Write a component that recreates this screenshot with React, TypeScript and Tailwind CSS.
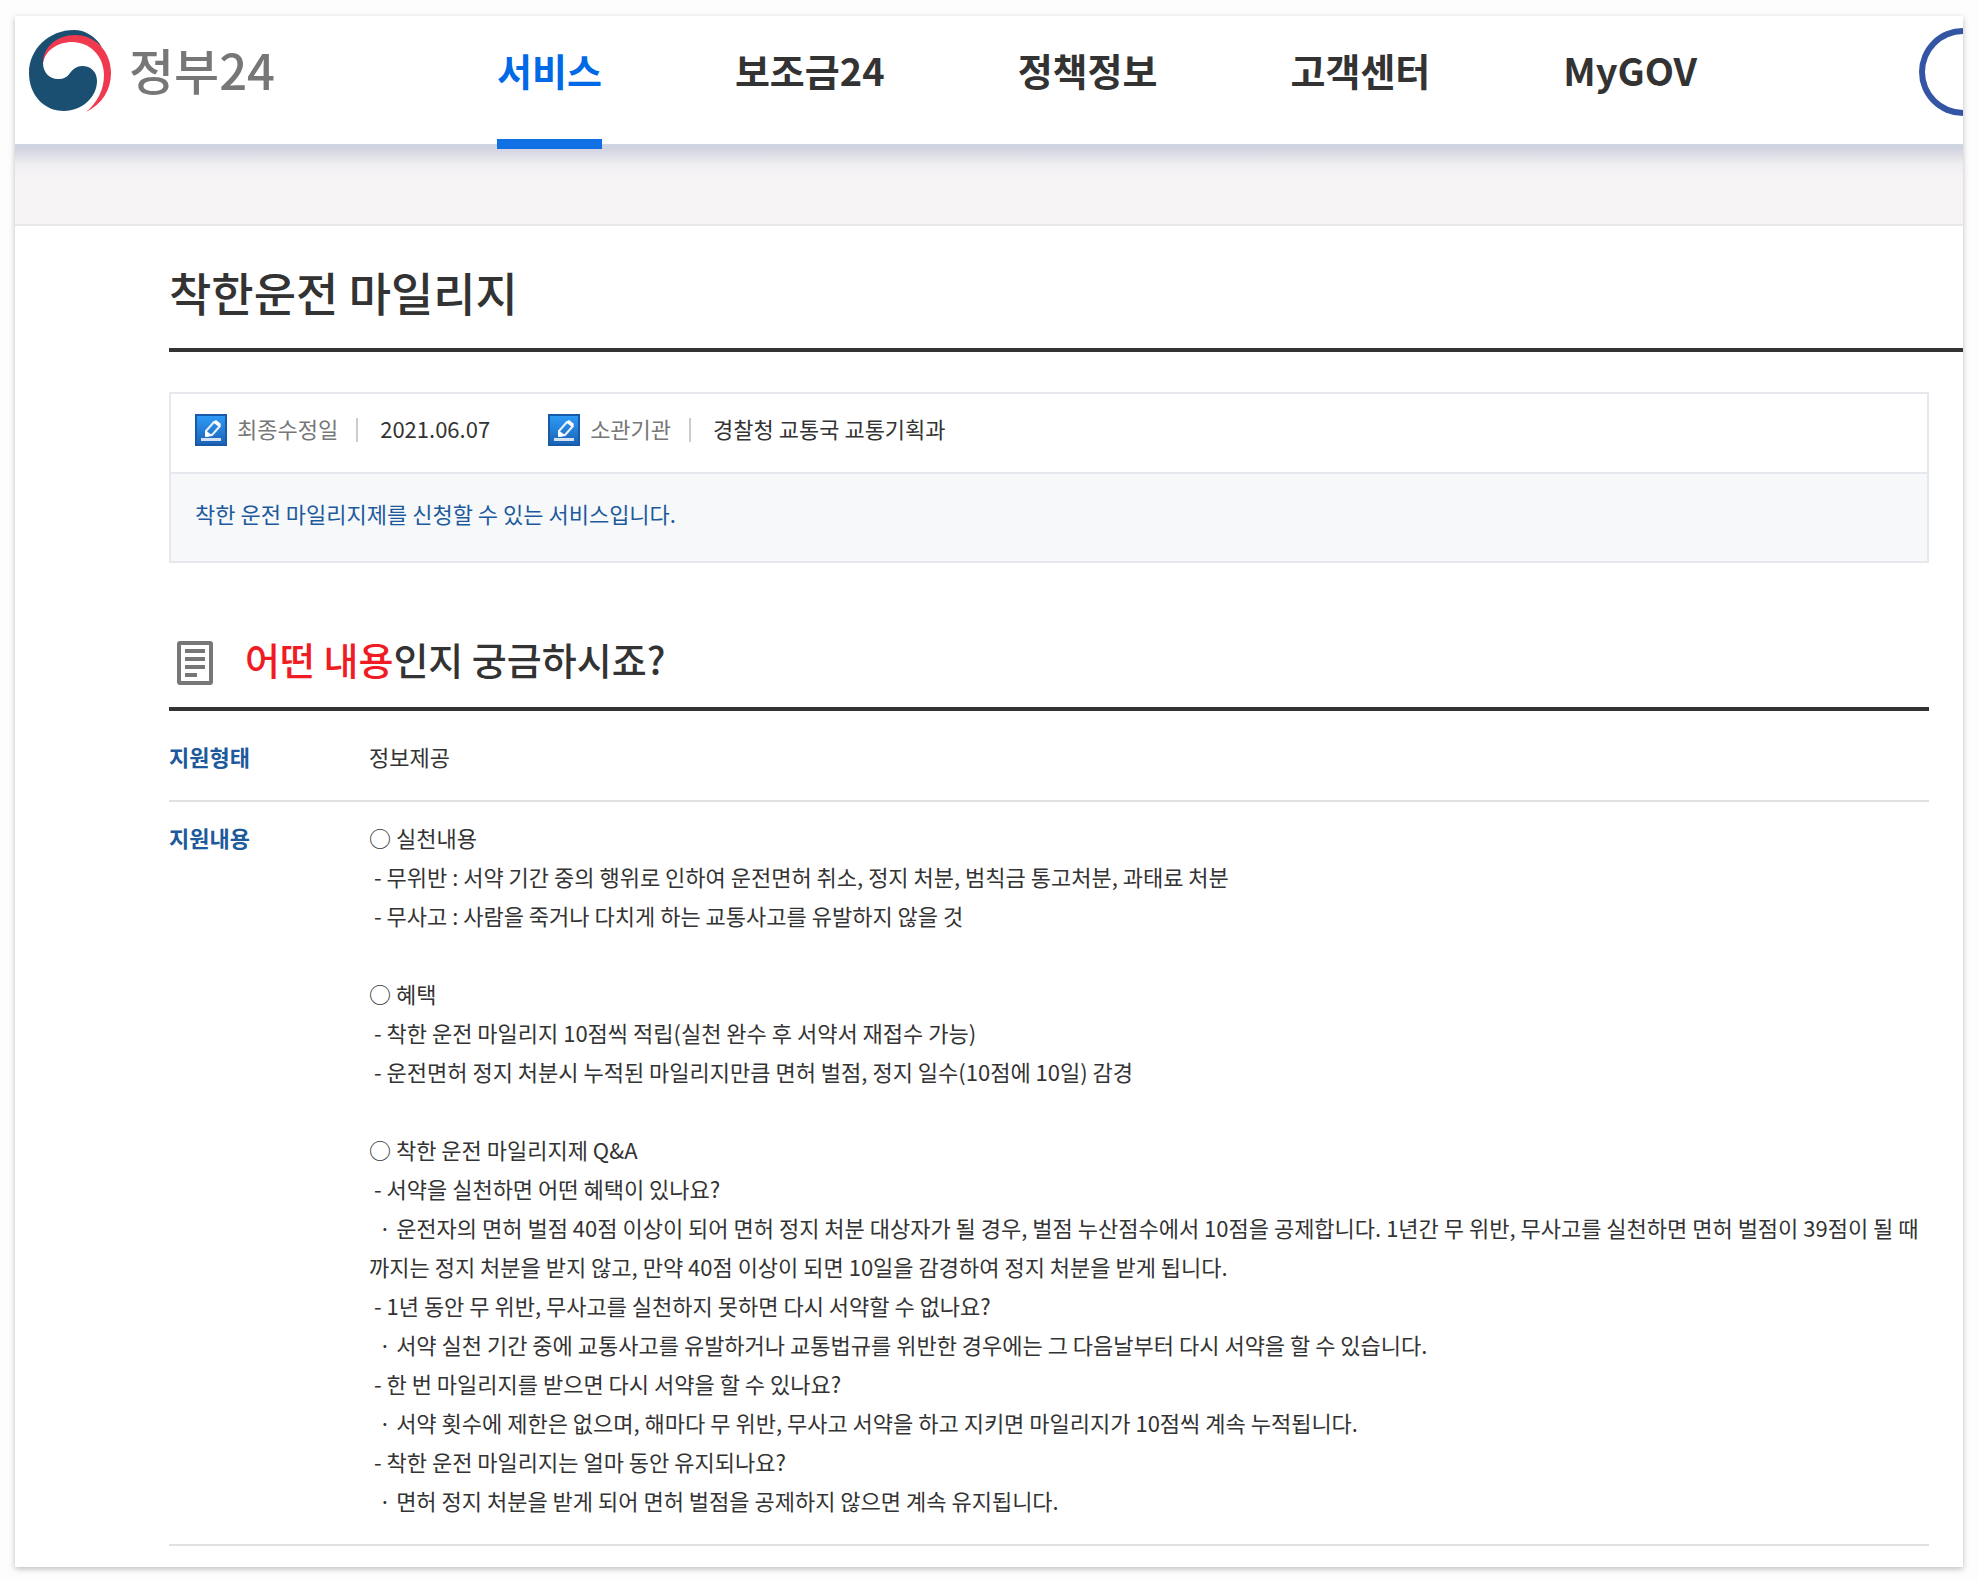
import { ReactNode } from "react";

const NAV_ITEMS = [
  { label: "서비스", active: true },
  { label: "보조금24" },
  { label: "정책정보" },
  { label: "고객센터" },
  { label: "MyGOV" },
];

const DETAILS = `○ 실천내용
 - 무위반 : 서약 기간 중의 행위로 인하여 운전면허 취소, 정지 처분, 범칙금 통고처분, 과태료 처분
 - 무사고 : 사람을 죽거나 다치게 하는 교통사고를 유발하지 않을 것

○ 혜택
 - 착한 운전 마일리지 10점씩 적립(실천 완수 후 서약서 재접수 가능)
 - 운전면허 정지 처분시 누적된 마일리지만큼 면허 벌점, 정지 일수(10점에 10일) 감경

○ 착한 운전 마일리지제 Q&A
 - 서약을 실천하면 어떤 혜택이 있나요?
  · 운전자의 면허 벌점 40점 이상이 되어 면허 정지 처분 대상자가 될 경우, 벌점 누산점수에서 10점을 공제합니다. 1년간 무 위반, 무사고를 실천하면 면허 벌점이 39점이 될 때까지는 정지 처분을 받지 않고, 만약 40점 이상이 되면 10일을 감경하여 정지 처분을 받게 됩니다.
 - 1년 동안 무 위반, 무사고를 실천하지 못하면 다시 서약할 수 없나요?
  · 서약 실천 기간 중에 교통사고를 유발하거나 교통법규를 위반한 경우에는 그 다음날부터 다시 서약을 할 수 있습니다.
 - 한 번 마일리지를 받으면 다시 서약을 할 수 있나요?
  · 서약 횟수에 제한은 없으며, 해마다 무 위반, 무사고 서약을 하고 지키면 마일리지가 10점씩 계속 누적됩니다.
 - 착한 운전 마일리지는 얼마 동안 유지되나요?
  · 면허 정지 처분을 받게 되어 면허 벌점을 공제하지 않으면 계속 유지됩니다.`;

function TaegukLogo() {
  return (
    <svg viewBox="0 0 82 82" className="size-[82px]" aria-hidden="true">
      <path
        fill="#1b4f72"
        d="M73 17C66 6 56 0 45 0 20 0 0 19 0 43c0 22 15 38 35 38 18 0 33-14 33-30 0-9-6-15-15-15-5 0-9 3-12 7-3 4-6 6-12 6-9 0-15-7-15-16C16 19 29 8 45 6c11 0 20 4 28 11z"
      />
      <path
        fill="#f0384f"
        d="M14 33C14 17 28 5 46 5c20 0 36 16 36 38 0 17-9 31-25 39 11-9 18-22 18-37 0-19-14-33-32-33-15 0-27 9-29 21z"
      />
    </svg>
  );
}

function EditIcon() {
  return (
    <svg viewBox="0 0 32 32" className="size-8" aria-hidden="true">
      <defs>
        <linearGradient id="edit-bg" x1="0" y1="0" x2="0" y2="1">
          <stop offset="0" stopColor="#2d9cf8" />
          <stop offset="1" stopColor="#1c62b5" />
        </linearGradient>
      </defs>
      <rect x="1" y="1" width="30" height="30" fill="url(#edit-bg)" stroke="#175ba8" strokeWidth="2" />
      <path d="M11 17l8-9 6 4-8 9-5 1z" fill="none" stroke="#e8f1fb" strokeWidth="2" strokeLinejoin="round" />
      <path d="M10 16l7 5-7 2z M18 8l3-2 5 4-2 3z" fill="#fff" />
      <path d="M6 25.5h20" stroke="#d3e1f3" strokeWidth="3" />
    </svg>
  );
}

function DocumentIcon() {
  return (
    <svg viewBox="0 0 36 44" className="h-11 w-9" fill="none" stroke="#777" aria-hidden="true">
      <rect x="2" y="2" width="32" height="40" rx="1" strokeWidth="4" />
      <path d="M8 10h20M8 18h20M8 26h20M8 34h12" strokeWidth="4" />
    </svg>
  );
}

function InfoItem({ label, children }: { label: string; children: ReactNode }) {
  return (
    <div className="flex items-start leading-7">
      <EditIcon />
      <dt className="ml-2.5 text-[#777]">{label}</dt>
      <dd className="ml-[18px] flex gap-[22px] before:mt-1 before:h-6 before:w-0.5 before:bg-[#ccc]">{children}</dd>
    </div>
  );
}

export default function App() {
  return (
    <div className="bg-[#fdfdfd] px-[15px] pt-4 pb-[15px] font-['Noto_Sans_CJK_KR',sans-serif] text-[22px] text-[#333]">
      <div className="overflow-hidden bg-white pb-[21px] shadow-[0_2px_6px_rgba(0,0,0,0.25)]">
        <header className="relative z-10 flex h-[130px] items-start justify-between border-b-2 border-[#ced6e4] bg-white">
          <div className="flex">
            <a href="#" className="mt-3.5 ml-3.5 flex h-[82px] w-[468px] items-start gap-[18px]">
              <TaegukLogo />
              <span className="text-[49px] leading-[78px] font-medium text-[#777]">정부24</span>
            </a>
            <nav className="flex gap-[133px] text-[38px] leading-[108px] font-bold">
              {NAV_ITEMS.map((item) => (
                <a
                  key={item.label}
                  href="#"
                  className={
                    item.active
                      ? "relative text-[#0069e6] after:absolute after:top-[123px] after:left-0 after:h-2.5 after:w-full after:bg-[#1070e4]"
                      : "relative"
                  }
                >
                  {item.label}
                </a>
              ))}
            </nav>
          </div>
          <button aria-label="검색" className="mt-3 h-[88px] w-11 rounded-l-full border-[6px] border-r-0 border-[#3454a4]" />
        </header>
        <div className="h-20 border-b-2 border-[#e8e8e8] bg-[#f6f4f5] bg-[linear-gradient(#cdd0df,#dfdfe7_10px,#efeef1_18px,#f6f4f5_32px)]" />

        <main className="pl-[154px]">
          <h1 className="border-b-4 border-[#333] pt-[30px] pb-[22px] text-[46px] leading-[70px] font-medium">
            착한운전 마일리지
          </h1>

          <div className="mr-[34px]">
            <section className="mt-10 border-2 border-[#e7e8ee]">
              <dl className="flex h-[78px] gap-[58px] px-6 pt-5">
                <InfoItem label="최종수정일">2021.06.07</InfoItem>
                <InfoItem label="소관기관">경찰청 교통국 교통기획과</InfoItem>
              </dl>
              <p className="border-t-2 border-[#e7e8ee] bg-[#f7f8fa] px-6 pt-5 pb-7 leading-[39px] text-[#1d5a9c]">
                착한 운전 마일리지제를 신청할 수 있는 서비스입니다.
              </p>
            </section>

            <h2 className="mt-16 flex items-end gap-8 border-b-4 border-[#333] pb-4 pl-2 text-[38px] leading-[64px] font-medium">
              <span className="pb-1.5">
                <DocumentIcon />
              </span>
              <span>
                <span className="text-[#f01c24]">어떤 내용</span>인지 궁금하시죠?
              </span>
            </h2>

            <table className="w-full table-fixed text-left leading-[39px]">
              <tbody className="align-top">
                <tr className="border-b-2 border-[#e1e1e1]">
                  <th scope="row" className="w-[200px] pt-[26px] pb-6 font-bold text-[#1d5a9c]">지원형태</th>
                  <td className="pt-[26px] pb-6">정보제공</td>
                </tr>
                <tr className="border-b-2 border-[#e1e1e1]">
                  <th scope="row" className="pt-4 pb-6 font-bold text-[#1d5a9c]">지원내용</th>
                  <td className="pt-4 pb-6 whitespace-pre-wrap">{DETAILS}</td>
                </tr>
              </tbody>
            </table>
          </div>
        </main>
      </div>
    </div>
  );
}
